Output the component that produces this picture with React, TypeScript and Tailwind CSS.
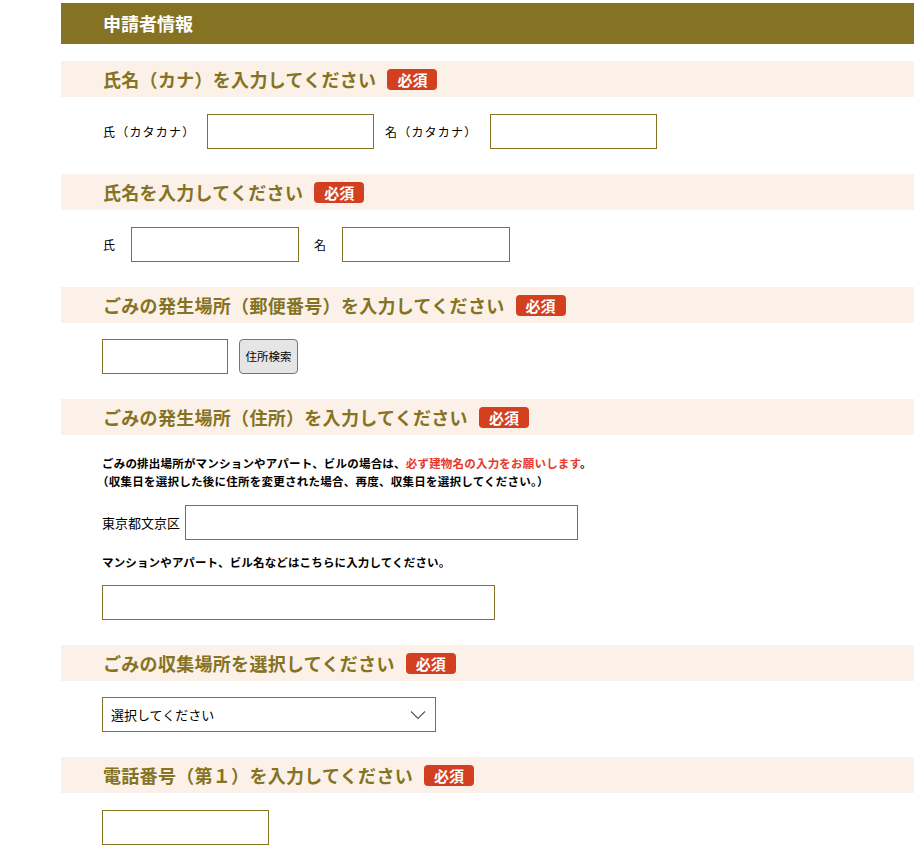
import React from "react";

const font = { fontFamily: '"Noto Sans CJK JP", "Noto Sans", sans-serif' };

function Badge() {
  return (
    <span className="inline-flex h-[21px] w-[50px] items-center justify-center rounded-[4px] bg-[#d2401f] text-[15px] font-bold leading-none text-white">
      必須
    </span>
  );
}

function SectionHead({ title }: { title: string }) {
  return (
    <div className="flex h-[36px] items-center gap-[11px] bg-[#fcf1e8] pl-[42px]">
      <span className="text-[18px] font-bold tracking-[0.3px] text-[#857323]">{title}</span>
      <Badge />
    </div>
  );
}

const inputCls = "h-[35px] border border-[#857323] bg-white outline-none";

export default function App() {
  return (
    <div className="min-h-[853px] bg-white pt-[3px] text-black" style={font}>
      <div className="ml-[61px] w-[853px]">
        <div className="flex h-[41px] items-center bg-[#857323] pl-[42px] text-[18px] font-bold text-white">
          申請者情報
        </div>

        <div className="mt-[17px]">
          <SectionHead title="氏名（カナ）を入力してください" />
          <div className="flex items-center pl-[42px] pt-[17px] text-[12px] tracking-[1.2px]">
            <span className="w-[104px]">氏（カタカナ）</span>
            <div className={`${inputCls} w-[167px]`} />
            <span className="ml-[11px] w-[105px]">名（カタカナ）</span>
            <div className={`${inputCls} w-[167px]`} />
          </div>
        </div>

        <div className="mt-[25px]">
          <SectionHead title="氏名を入力してください" />
          <div className="flex items-center pl-[42px] pt-[17px] text-[12px]">
            <span className="w-[28px]">氏</span>
            <div className={`${inputCls} w-[168px]`} />
            <span className="ml-[15px] w-[28px]">名</span>
            <div className={`${inputCls} w-[168px]`} />
          </div>
        </div>

        <div className="mt-[25px]">
          <SectionHead title="ごみの発生場所（郵便番号）を入力してください" />
          <div className="flex items-center pl-[41px] pt-[16px]">
            <div className={`${inputCls} w-[126px]`} />
            <button className="ml-[11px] h-[35px] w-[59px] rounded-[4px] border border-[#767676] bg-[#e5e5e5] text-[11.5px] text-black">
              住所検索
            </button>
          </div>
        </div>

        <div className="mt-[25px]">
          <SectionHead title="ごみの発生場所（住所）を入力してください" />
          <div className="pl-[41px] pt-[19px]">
            <p className="text-[11.5px] font-bold leading-[18px] tracking-[0.2px]">
              ごみの排出場所がマンションやアパート、ビルの場合は、
              <span className="text-[#e8382b]">必ず建物名の入力をお願いします</span>。
            </p>
            <p className="-ml-[5px] text-[11.5px] font-bold leading-[18px] tracking-[0.25px]">
              （収集日を選択した後に住所を変更された場合、再度、収集日を選択してください。）
            </p>
            <div className="mt-[15px] flex items-center text-[13px]">
              <span className="w-[83px]">東京都文京区</span>
              <div className={`${inputCls} w-[393px]`} />
            </div>
            <p className="mt-[13px] text-[11.5px] font-bold leading-[18px] tracking-[0.15px]">
              マンションやアパート、ビル名などはこちらに入力してください。
            </p>
            <div className={`${inputCls} mt-[14px] w-[393px]`} />
          </div>
        </div>

        <div className="mt-[25px]">
          <SectionHead title="ごみの収集場所を選択してください" />
          <div className="pl-[41px] pt-[16px]">
            <div className={`${inputCls} flex w-[334px] items-center justify-between pl-[8px] pr-[9px] text-[13px]`}>
              <span>選択してください</span>
              <svg width="16" height="10" viewBox="0 0 16 10" fill="none">
                <path d="M1 1.5 L8 8.5 L15 1.5" stroke="#555" strokeWidth="1.1" />
              </svg>
            </div>
          </div>
        </div>

        <div className="mt-[25px]">
          <SectionHead title="電話番号（第１）を入力してください" />
          <div className="pl-[41px] pt-[17px]">
            <div className={`${inputCls} w-[167px]`} />
          </div>
        </div>
      </div>
    </div>
  );
}
